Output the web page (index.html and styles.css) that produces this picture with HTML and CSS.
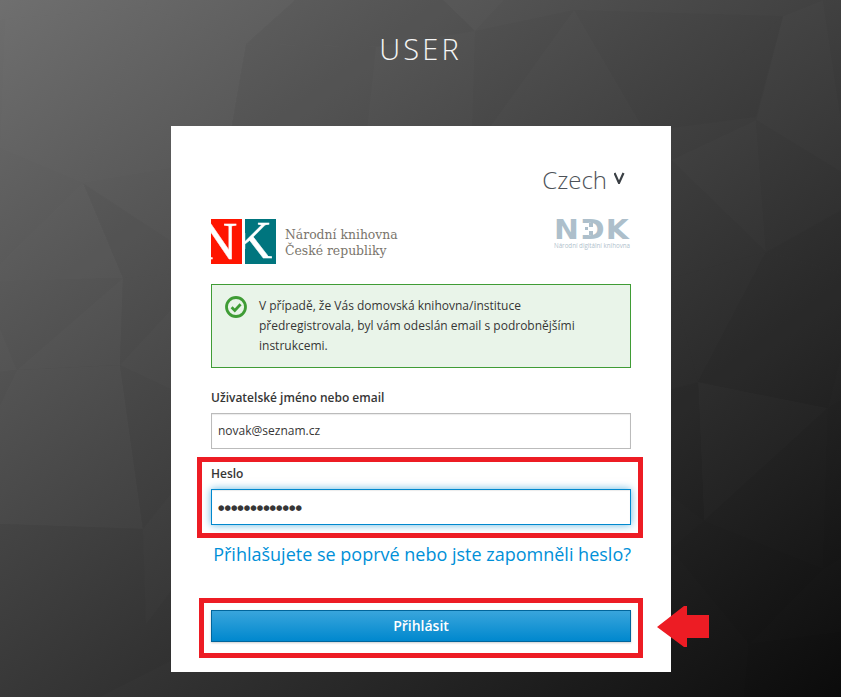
FILE: index.html
```html
<!DOCTYPE html>
<html lang="cs">
<head>
<meta charset="utf-8">
<title>USER</title>
<link rel="stylesheet" href="styles.css">
</head>
<body>

<svg class="facets" width="841" height="697" viewBox="0 0 841 697">
  <g class="lighter">
    <polygon points="0,0 147,0 146,7 5,19 0,20"/>
    <polygon points="0,148 83,183 146,7 5,19"/>
    <polygon points="147,0 295,0 246,44 146,7"/>
    <polygon points="443,0 504,0 475,31"/>
    <polygon points="83,183 171,168 231,130 246,44 146,7"/>
    <polygon points="0,281 123,278 83,183 0,264"/>
    <polygon points="17,370 120,365 123,278"/>
    <polygon points="0,372 17,370 0,328"/>
    <polygon points="0,524 143,529 120,365 17,370 0,405"/>
    <polygon points="671,160 756,120 766,252"/>
    <polygon points="756,120 841,172 841,120 823,0 783,16"/>
    <polygon points="671,278 766,252 698,382"/>
    <polygon points="698,382 704,521 828,408"/>
  </g>
  <g class="darker">
    <polygon points="295,0 443,0 475,31 376,47 246,44"/>
    <polygon points="246,44 376,47 367,130 231,130"/>
    <polygon points="475,31 574,10 488,130 472,130"/>
    <polygon points="574,10 783,16 657,130 644,130"/>
    <polygon points="783,16 756,117 657,130"/>
    <polygon points="83,183 123,278 171,274 171,241"/>
    <polygon points="123,278 171,274 171,310 120,365"/>
    <polygon points="120,365 171,389 171,494 143,529"/>
    <polygon points="0,524 143,529 146,624 0,697"/>
    <polygon points="146,624 171,591 171,661 100,697 0,697"/>
    <polygon points="671,278 766,252 841,273 841,355 828,408 698,382"/>
    <polygon points="698,382 671,389 671,495 704,521"/>
    <polygon points="704,521 823,569 749,644 671,549"/>
    <polygon points="749,644 841,632 841,697 744,697"/>
    <polygon points="766,252 841,210 841,273"/>
    <polygon points="828,408 841,400 841,558 823,569"/>
  </g>
</svg>

<h1 class="realm">USER</h1>

<div class="card">
  <div class="locale">
    <span>Czech</span>
    <svg class="chevron" width="11" height="12" viewBox="0 0 11 12"><path d="M0.5 1 L5 11 L9.5 1"/></svg>
  </div>

  <div class="logos">
    <div class="nk">
      <svg class="nk-mark" width="65" height="45" viewBox="0 0 65 45">
        <svg width="31" height="45"><rect class="nk-red" width="31" height="45"/><text x="-12" y="40">N</text></svg>
        <svg x="34" width="31" height="45">
          <rect class="nk-teal" width="31" height="45"/>
          <text x="-11" y="39">K</text>
          <rect class="nk-teal" width="8" height="14"/>
          <rect class="nk-teal" y="30" width="8" height="15"/>
        </svg>
      </svg>
      <span class="nk-name">Národní knihovna<br>České republiky</span>
    </div>
    <svg class="ndk" width="78" height="31" viewBox="0 0 78 31">
      <text class="ndk-mark" transform="scale(1.1 1)" y="20">NDK</text>
      <rect class="ndk-gap" x="27" y="4" width="8" height="12"/>
      <rect class="ndk-bit" x="31" y="8" width="3" height="3"/>
      <rect class="ndk-bit" x="35" y="4" width="4" height="4"/>
      <rect class="ndk-bit" x="35" y="12" width="4" height="4"/>
      <text class="ndk-name" x="0" y="29">Národní digitální knihovna</text>
    </svg>
  </div>

  <div class="alert">
    <svg class="alert-icon" width="22" height="22" viewBox="0 0 22 22">
      <circle cx="11" cy="11" r="9.5"/>
      <path d="M6.6 11.2 L9.8 14.4 L15.6 8.3"/>
    </svg>
    <p>V případě, že Vás domovská knihovna/instituce předregistrovala, byl vám odeslán email s podrobnějšími instrukcemi.</p>
  </div>

  <div class="field">
    <label class="field-label">Uživatelské jméno nebo email</label>
    <div class="input">novak@seznam.cz</div>
  </div>

  <div class="field field-marked">
    <span class="mark mark-password"></span>
    <label class="field-label">Heslo</label>
    <div class="input input-focus"><span class="dots">●●●●●●●●●●●●●</span></div>
  </div>

  <div class="forgot"><a href="#">Přihlašujete se poprvé nebo jste zapomněli heslo?</a></div>

  <div class="submit">
    <span class="mark mark-submit"></span>
    <div class="btn">Přihlásit</div>
    <svg class="arrow" width="52" height="42" viewBox="0 0 52 42"><polygon points="0,22 27,1 30,1 30,10 52,10 52,33 30,33 30,42 27,42"/></svg>
  </div>
</div>

</body>
</html>
```

FILE: styles.css
```css
html, body {
	margin: 0;
	height: 100%;
}
body {
	width: 841px;
	height: 697px;
	overflow: hidden;
	position: relative;
	background: linear-gradient(144deg, #6e6e6e, #0c0c0c);
	font-family: "Open Sans", sans-serif;
	font-size: 12px;
	color: #363636;
}
.facets {
	position: absolute;
	left: 0;
	top: 0;
}
.lighter polygon {
	fill: #fff;
	fill-opacity: 0.012;
}
.darker polygon {
	fill: #000;
	fill-opacity: 0.025;
}
.realm {
	position: relative;
	margin: 0;
	padding-top: 29px;
	height: 96px;
	box-sizing: border-box;
	text-align: center;
	font-size: 29px;
	line-height: 40px;
	font-weight: 300;
	letter-spacing: 3.2px;
	color: #f5f5f5;
}
.card {
	position: relative;
	width: 500px;
	height: 546px;
	box-sizing: border-box;
	margin: 30px 0 0 171px;
	padding: 35px 40px 0;
	background: #fff;
}
.locale {
	display: flex;
	justify-content: flex-end;
	align-items: center;
	gap: 7px;
	padding-right: 6px;
	height: 36px;
	font-size: 24px;
	font-weight: 300;
	color: #4d5258;
}
.chevron {
	margin-top: -2px;
	fill: none;
	stroke: #3a3f44;
	stroke-width: 2.2;
}
.logos {
	display: flex;
	justify-content: space-between;
	margin-top: 22px;
	height: 65px;
}
.nk {
	display: flex;
	height: 45px;
}
.nk-mark text {
	fill: #fff;
	stroke: #fff;
	stroke-width: 0.4;
	font-family: "Liberation Serif", serif;
	font-size: 53px;
}
.nk-red {
	fill: #ff1500;
}
.nk-teal {
	fill: #00757e;
}
.nk-name {
	margin: 8px 0 0 9px;
	font-family: "DejaVu Serif", serif;
	font-size: 12.4px;
	line-height: 16px;
	color: #7a756c;
}
.ndk {
	margin-right: -1px;
}
.ndk-mark {
	fill: #adbfcb;
	font-family: "DejaVu Sans", sans-serif;
	font-weight: bold;
	font-size: 27px;
	letter-spacing: 1px;
}
.ndk-gap {
	fill: #fff;
}
.ndk-bit {
	fill: #adbfcb;
}
.ndk-name {
	fill: #b0c1cc;
	font-family: "Open Sans", sans-serif;
	font-size: 6.2px;
}
.alert {
	display: flex;
	gap: 12px;
	box-sizing: border-box;
	height: 84px;
	padding: 11px 14px 11px 13px;
	border: 1px solid #3f9c35;
	background: #e9f4e9;
	line-height: 20px;
}
.alert p {
	margin: 0;
	width: 340px;
}
.alert-icon {
	flex: none;
	fill: none;
	stroke: #3f9c35;
	stroke-width: 2.8;
}
.field {
	position: relative;
	margin-top: 21px;
}
.field-marked {
	margin-top: 16px;
}
.field-label {
	display: block;
	height: 24px;
	font-size: 12px;
	line-height: 18px;
	font-weight: 600;
}
.input {
	box-sizing: border-box;
	height: 36px;
	padding: 0 6px;
	border: 1px solid #bbb;
	box-shadow: inset 0 1px 1px rgba(3, 3, 3, 0.08);
	line-height: 34px;
}
.input-focus {
	border-color: #0088ce;
	box-shadow: inset 0 1px 1px rgba(3, 3, 3, 0.08), 0 0 8px rgba(0, 136, 206, 0.6);
}
.dots {
	font-family: "DejaVu Sans", sans-serif;
	font-size: 7.4px;
	vertical-align: 1px;
}
.forgot {
	margin-top: 16px;
	text-align: right;
	font-size: 18px;
	line-height: 26px;
}
.forgot a {
	color: #0090d8;
	text-decoration: none;
}
.submit {
	position: relative;
	margin-top: 43px;
}
.btn {
	box-sizing: border-box;
	height: 32px;
	border: 1px solid #00659c;
	background: linear-gradient(#39a5dc, #0088ce);
	box-shadow: 0 1px 2px rgba(3, 3, 3, 0.2);
	color: #fff;
	font-weight: 600;
	font-size: 14px;
	line-height: 30px;
	text-align: center;
}
.mark {
	position: absolute;
	box-sizing: border-box;
	border: 5px solid #ed1c24;
	pointer-events: none;
}
.mark-password {
	left: -14px;
	right: -12px;
	top: -8px;
	bottom: -13px;
}
.mark-submit {
	left: -12px;
	right: -12px;
	top: -12px;
	bottom: -16px;
}
.arrow {
	position: absolute;
	left: 446px;
	top: -5px;
	fill: #ed1c24;
}
```
